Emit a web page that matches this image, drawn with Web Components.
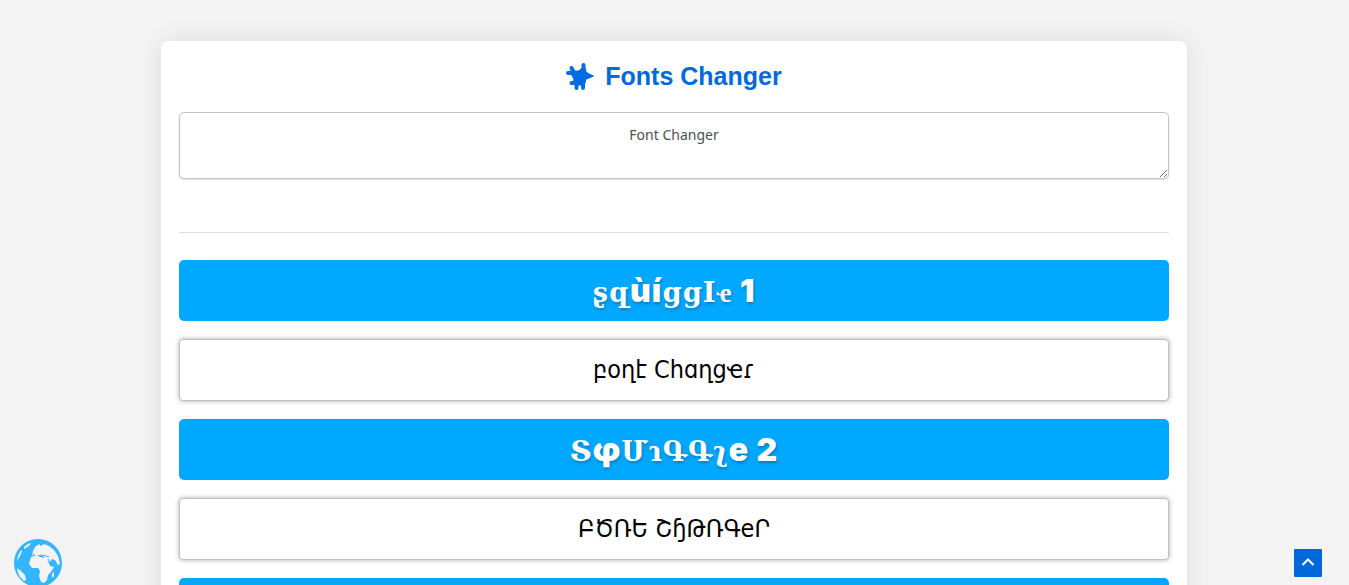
<!DOCTYPE html>
<html lang="en">
<head>
<meta charset="utf-8">
<meta name="viewport" content="width=device-width, initial-scale=1">
<title>Fonts Changer</title>
<style>
html { scrollbar-width: none; }
body { margin: 0; background: #f3f3f3; font-family: "Noto Sans", "DejaVu Sans", sans-serif; }
</style>
</head>
<body>
<font-changer></font-changer>
<globe-badge></globe-badge>
<scroll-top></scroll-top>

<script>
function define(name, html) {
  const template = document.createElement('template');
  template.innerHTML = html;
  customElements.define(name, class extends HTMLElement {
    constructor() {
      super();
      this.attachShadow({ mode: 'open' }).append(template.content.cloneNode(true));
    }
  });
}

define('app-title', `
<style>
:host { display: block; }
h1 { margin: 0; display: flex; align-items: center; justify-content: center; gap: 11px; color: #0069d9;
  font: bold 25px/36px "Liberation Sans", Arial, sans-serif; }
svg { width: 28px; height: 28px; display: block; }
</style>
<h1>
  <svg viewBox="0 0 28 28" aria-hidden="true" fill="#006be3" stroke="#006be3" stroke-linejoin="round" stroke-linecap="round">
    <path stroke-width="1" d="M7 9h6l3-3h3l1 4 3 2 4.500 2-4.500 2-3 1-1 4-2 2h-6l-4-2 1-4-3-5z"/>
    <path stroke-width="4" fill="none" d="M17.500 3v8M5.500 6l3 6M2 11h6M5.500 21h6M10.500 26v-5M17 26v-6"/>
  </svg>
  <slot></slot>
</h1>`);

define('source-text', `
<style>
:host { display: block; }
textarea { display: block; box-sizing: border-box; width: 100%; height: 67px; padding: 11px 12px; border: 1px solid #c4c4c4;
  border-radius: 5px; background: #fff; color: #495057; text-align: center; resize: vertical; outline: none;
  box-shadow: 0 1px 2px #0002; font: 14px/21px "Noto Sans", sans-serif; }
</style>
<textarea aria-label="Text to convert" spellcheck="false">Font Changer</textarea>`);

define('style-name', `
<style>
:host { display: block; }
h2 { box-sizing: border-box; min-height: 61px; margin: 0; padding: 8px; border-radius: 5px; background: #00a8ff; color: #fff;
  text-align: center; font: 900 32px/45px Inter, "DejaVu Sans", sans-serif; letter-spacing: 1px; text-shadow: 1px 2px 3px #0004; }
::slotted(span) { font: bold 27px/30px "DejaVu Serif", serif; }
</style>
<h2><slot></slot></h2>`);

define('style-output', `
<style>
:host { display: block; box-sizing: border-box; min-height: 62px; padding: 8px; border: 1px solid #c0c0c0; border-radius: 4px;
  background: #fff; color: #000; text-align: center; box-shadow: 0 0 5px #0005;
  font: 25px/44px "DejaVu Sans Condensed", "DejaVu Sans", sans-serif; }
</style>
<slot></slot>`);

define('font-changer', `
<style>
:host { display: block; padding: 41px 17px 0 16px; }
main { box-sizing: border-box; max-width: 1026px; margin: 0 auto; padding: 17px 18px 18px; border-radius: 8px;
  background: #fff; box-shadow: 0 0 24px #00000018; }
source-text { margin-top: 18px; }
hr { margin: 53px 0 27px; border: 0; border-top: 1px solid #dfdfdf; }
section { display: grid; gap: 18px; }
</style>
<main>
  <app-title>Fonts Changer</app-title>
  <source-text></source-text>
  <hr>
  <section>
    <style-name><span>ʂզ</span>ùí<span>ցցӀҽ</span> 1</style-name>
    <style-output>բօղէ Chɑղցҽɾ</style-output>
    <style-name><span>Տ</span>φ<span>ՄɿԳԳʅ</span>e 2</style-name>
    <style-output>ԲԾՌԵ ՇɧԹՌԳeՐ</style-output>
    <style-name></style-name>
  </section>
</main>`);

define('globe-badge', `
<style>
:host { position: fixed; left: 14px; bottom: -2px; width: 48px; height: 48px; }
button { display: block; width: 100%; height: 100%; padding: 0; border: 0; background: none; cursor: pointer; }
svg { display: block; width: 100%; height: 100%; }
</style>
<button aria-label="Language">
  <svg viewBox="0 0 48 48">
    <circle cx="24" cy="24" r="24" fill="#33b5ff"/>
    <g fill="#f3f3f3">
      <path d="M10 8l4-3 3-1-2 3-5 3zM4 17l3-6 1 1-2 5-3 5z"/>
      <path d="M3 29l4 3 4 4 1 5-2 1-4-4-2-4z"/>
      <path d="M19 12l2-4 4-3 2 2 3-2 5 2 5 4 4 6 2 8-2 1-3-5-3-1-2 3-4-2-3-4-4-1-3 1-2-2-2 2z"/>
      <path d="M17 18l6-2 3 2 5 1 3 3 2 5 4 1-3 5-3 3-1 5-3 3-3-1-2-6 1-5-2-3-6 0-3-4 1-4z"/>
      <path d="M38 35l2-2v4l-2 2z"/>
    </g>
    <path d="M34 20l3 5 2 1M26 16l6 1 3 1" fill="none" stroke="#33b5ff"/>
  </svg>
</button>`);

define('scroll-top', `
<style>
:host { position: fixed; right: 27px; bottom: 8px; }
a { display: grid; place-items: center; width: 28px; height: 28px; border-radius: 1px; background: #0069d9; }
svg { width: 14px; height: 14px; }
</style>
<a href="#" aria-label="Back to top">
  <svg viewBox="0 0 14 14" fill="none" stroke="#fff" stroke-width="2"><path d="M1.500 9L7 3.500 12.500 9"/></svg>
</a>`);
</script>
</body>
</html>
